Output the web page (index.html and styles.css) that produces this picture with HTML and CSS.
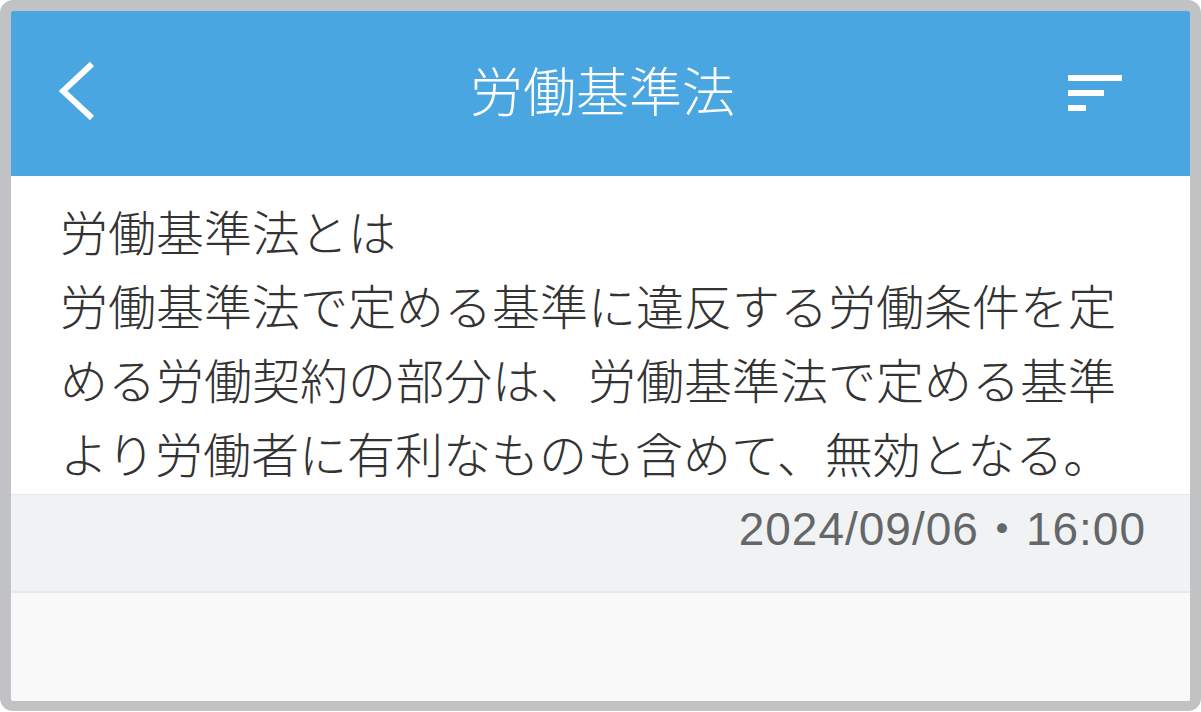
FILE: index.html
```html
<!DOCTYPE html>
<html lang="ja">
<head>
    <meta charset="UTF-8">
    <meta name="viewport" content="width=device-width, initial-scale=1.0">
    <title>労働基準法</title>
    <link rel="stylesheet" href="styles.css">
</head>
<body>
    <div class="frame">
        <header class="topbar">
            <button class="icon-btn back" aria-label="戻る">
                <svg width="40" height="64" viewBox="0 0 40 64">
                    <polyline points="33,4 4,31 33,58" fill="none" stroke="#fff" stroke-width="6"/>
                </svg>
            </button>
            <h1 class="title">労働基準法</h1>
            <button class="icon-btn sort" aria-label="並べ替え">
                <span class="bar bar-long"></span>
                <span class="bar bar-mid"></span>
                <span class="bar bar-short"></span>
            </button>
        </header>
        <div class="article">
            <p class="body-text">労働基準法とは<br>労働基準法で定める基準に違反する労働条件を定める労働契約の部分は、労働基準法で定める基準より労働者に有利なものも含めて、無効となる。</p>
        </div>
        <div class="meta">
            <span class="date">2024/09/06・16:00</span>
        </div>
        <div class="rest"></div>
    </div>
</body>
</html>
```

FILE: styles.css
```css
body {
    margin: 0;
    background: #ffffff;
    font-family: "Noto Sans CJK JP", "Noto Sans", sans-serif;
}

.frame {
    box-sizing: border-box;
    width: 1201px;
    height: 711px;
    border: 11px solid #c1c2c4;
    border-bottom-width: 10px;
    border-radius: 13px;
    display: flex;
    flex-direction: column;
    overflow: hidden;
    background: #f9f9f9;
}

.topbar {
    height: 165px;
    flex: none;
    background: #49a6e0;
    display: flex;
    align-items: center;
    justify-content: space-between;
    padding: 0 68px 0 48px;
}

.icon-btn {
    background: none;
    border: 0;
    padding: 0;
    margin: 0;
    cursor: pointer;
}

.back {
    width: 40px;
    height: 64px;
    margin-top: -3px;
}

.back svg {
    display: block;
}

.title {
    margin: 0;
    color: #ffffff;
    font-size: 53px;
    font-weight: 300;
    line-height: 1;
    margin-top: -8px;
    margin-left: 38px;
}

.sort {
    width: 54px;
    display: flex;
    flex-direction: column;
    gap: 9px;
    margin-top: -2px;
}

.bar {
    display: block;
    height: 6px;
    background: #ffffff;
}

.bar-long { width: 54px; }
.bar-mid { width: 36px; }
.bar-short { width: 18px; }

.article {
    background: #ffffff;
    padding: 17px 50px 5px 49px;
    border-bottom: 1px solid #e6e7e9;
}

.body-text {
    margin: 0;
    color: #333333;
    font-size: 48px;
    font-weight: 300;
    line-height: 74px;
}

.meta {
    height: 98px;
    flex: none;
    box-sizing: border-box;
    background: #f1f2f4;
    border-bottom: 2px solid #e8e9eb;
    padding: 11px 44px 0 0;
    text-align: right;
}

.date {
    color: #646769;
    font-family: "Liberation Sans", "Noto Sans CJK JP", sans-serif;
    font-size: 46px;
    line-height: 46px;
    letter-spacing: 1px;
}

.rest {
    flex: 1;
    background: #f9f9f9;
}
```
